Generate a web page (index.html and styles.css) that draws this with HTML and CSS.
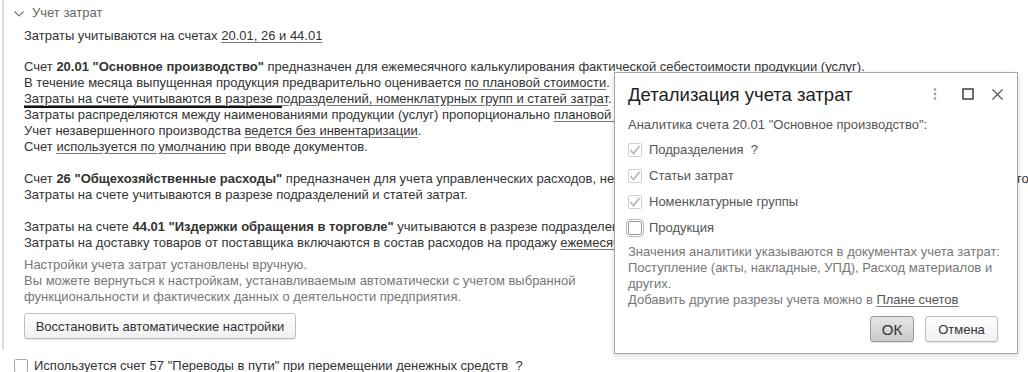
FILE: index.html
```html
<!DOCTYPE html>
<html lang="ru">
<head>
    <meta charset="UTF-8">
    <title>Учет затрат</title>
    <link rel="stylesheet" href="styles.css">
</head>
<body>

    <!-- ГРУППА "УЧЕТ ЗАТРАТ" -->
    <div class="group">
        <div class="group-title">
            <svg class="chevron" width="10" height="6" viewBox="0 0 10 6"><path d="M0.5 0.5 L5 5 L9.5 0.5" fill="none" stroke="#777" stroke-width="1.2"/></svg>
            Учет затрат
        </div>

        <div class="line accounts">Затраты учитываются на счетах <a href="#">20.01, 26 и 44.01</a></div>

        <div class="para">
            <div class="line">Счет <b>20.01 "Основное производство"</b> предназначен для ежемесячного калькулирования фактической себестоимости продукции (услуг).</div>
            <div class="line">В течение месяца выпущенная продукция предварительно оценивается <a href="#">по плановой стоимости</a>.</div>
            <div class="line"><a href="#"><span class="marked">Затраты на счете учитываются в разрезе</span> подразделений, номенклатурных групп и статей затрат</a>.</div>
            <div class="line">Затраты распределяются между наименованиями продукции (услуг) пропорционально <a href="#">плановой себестоимости выпуска</a>.</div>
            <div class="line">Учет незавершенного производства <a href="#">ведется без инвентаризации</a>.</div>
            <div class="line">Счет <a href="#">используется по умолчанию</a> при вводе документов.</div>
        </div>

        <div class="para">
            <div class="line">Счет <b>26 "Общехозяйственные расходы"</b> предназначен для учета управленческих расходов, не связанных с производством, и списывается ежемесячно в состав годовых расходов</div>
            <div class="line">Затраты на счете учитываются в разрезе подразделений и статей затрат.</div>
        </div>

        <div class="para">
            <div class="line">Затраты на счете <b>44.01 "Издержки обращения в торговле"</b> учитываются в разрезе подразделений и статей затрат.</div>
            <div class="line">Затраты на доставку товаров от поставщика включаются в состав расходов на продажу <a href="#">ежемесячно</a>.</div>
        </div>

        <div class="note">
            <div class="line">Настройки учета затрат установлены вручную.</div>
            <div class="line">Вы можете вернуться к настройкам, устанавливаемым автоматически с учетом выбранной</div>
            <div class="line">функциональности и фактических данных о деятельности предприятия.</div>
        </div>

        <button class="btn btn-restore">Восстановить автоматические настройки</button>
    </div>

    <label class="check-row">
        <span class="box"></span>
        Используется счет 57 "Переводы в пути" при перемещении денежных средств &nbsp;?
    </label>

    <!-- ОКНО ДЕТАЛИЗАЦИИ -->
    <div class="dialog">
        <div class="dialog-head">
            <div class="dialog-title">Детализация учета затрат</div>
            <div class="dialog-icons">
                <svg class="ic-more" width="4" height="12" viewBox="0 0 4 12"><circle cx="2" cy="1.5" r="1.3" fill="#999"/><circle cx="2" cy="6" r="1.3" fill="#999"/><circle cx="2" cy="10.5" r="1.3" fill="#999"/></svg>
                <svg class="ic-max" width="12" height="12" viewBox="0 0 12 12"><rect x="1" y="1" width="10" height="10" fill="none" stroke="#333" stroke-width="1.4"/></svg>
                <svg class="ic-close" width="11" height="11" viewBox="0 0 11 11"><path d="M0.5 0.5 L10.5 10.5 M10.5 0.5 L0.5 10.5" stroke="#555" stroke-width="1.2"/></svg>
            </div>
        </div>

        <div class="dialog-caption">Аналитика счета 20.01 "Основное производство":</div>

        <div class="opts">
            <div class="opt"><span class="box checked"><svg width="12" height="10" viewBox="0 0 12 10"><path d="M1.5 5 L4.5 8.5 L10.5 1" fill="none" stroke="#b8b8b8" stroke-width="1.8"/></svg></span>Подразделения &nbsp;?</div>
            <div class="opt"><span class="box checked"><svg width="12" height="10" viewBox="0 0 12 10"><path d="M1.5 5 L4.5 8.5 L10.5 1" fill="none" stroke="#b8b8b8" stroke-width="1.8"/></svg></span>Статьи затрат</div>
            <div class="opt"><span class="box checked"><svg width="12" height="10" viewBox="0 0 12 10"><path d="M1.5 5 L4.5 8.5 L10.5 1" fill="none" stroke="#b8b8b8" stroke-width="1.8"/></svg></span>Номенклатурные группы</div>
            <div class="opt"><span class="box focused"></span>Продукция</div>
        </div>

        <div class="dialog-note">
            <div>Значения аналитики указываются в документах учета затрат:</div>
            <div>Поступление (акты, накладные, УПД), Расход материалов и</div>
            <div>других.</div>
            <div>Добавить другие разрезы учета можно в <a href="#">Плане счетов</a></div>
        </div>

        <div class="dialog-buttons">
            <button class="btn btn-ok">ОК</button>
            <button class="btn btn-cancel">Отмена</button>
        </div>
    </div>

</body>
</html>
```

FILE: styles.css
```css
body {
    margin: 0;
    width: 1028px;
    height: 372px;
    overflow: hidden;
    background: #fff;
    font-family: "Liberation Sans", Arial, sans-serif;
    font-size: 13px;
    line-height: 16px;
    color: #333;
    position: relative;
}

a {
    color: #333;
    text-decoration: underline;
    text-decoration-color: #777;
    text-underline-offset: 2px;
}

b {
    font-weight: bold;
}

/* ГРУППА */
.group {
    margin-left: 2px;
    border-left: 2px solid #ddd;
    padding: 5px 0 0 20px;
    height: 350px;
    box-sizing: border-box;
}

.group-title {
    display: flex;
    align-items: center;
    gap: 8px;
    margin-left: -10px;
    color: #666;
}

.chevron {
    margin-top: 1px;
}

.line {
    white-space: nowrap;
}

.accounts {
    margin-top: 7px;
}

.para {
    margin-top: 15px;
}

.para + .para {
    margin-top: 16px;
}

/* жирная черта под текстом (пометка) */
.marked {
    box-shadow: 0 2px 0 #111;
    padding-right: 9px;
    margin-right: -9px;
    display: inline-block;
    line-height: 14px;
    text-decoration: underline;
    text-decoration-color: #777;
    text-underline-offset: 2px;
}

.note {
    margin-top: 6px;
    color: #777;
}

/* КНОПКИ */
.btn {
    font-family: "Liberation Sans", Arial, sans-serif;
    font-size: 13px;
    color: #333;
    border: 1px solid #bdbdbd;
    border-radius: 3px;
    background: linear-gradient(#fff, #f0f0f0);
    box-shadow: 0 1px 1px rgba(0,0,0,0.12);
    cursor: pointer;
}

.btn-restore {
    margin-top: 8px;
    height: 26px;
    width: 272px;
    padding: 0;
}

/* ФЛАЖОК */
.check-row {
    display: flex;
    align-items: center;
    gap: 6px;
    margin-left: 14px;
    margin-top: 8px;
}

.box {
    width: 12px;
    height: 12px;
    border: 1px solid #aaa;
    border-radius: 2px;
    background: #fff;
    display: inline-flex;
    align-items: center;
    justify-content: center;
    flex: none;
}

/* ОКНО */
.dialog {
    position: absolute;
    left: 614px;
    top: 72px;
    width: 404px;
    height: 282px;
    background: #fff;
    border: 1px solid #a8a8a8;
    box-shadow: 0 2px 6px rgba(0,0,0,0.15);
    padding: 0 0 0 13px;
    box-sizing: border-box;
}

.dialog-head {
    display: flex;
    align-items: center;
    justify-content: space-between;
    height: 42px;
    padding-right: 14px;
}

.dialog-title {
    font-size: 18.5px;
    color: #222;
    padding-top: 2px;
}

.dialog-icons {
    display: flex;
    align-items: center;
}

.ic-max {
    margin-left: 25px;
}

.ic-close {
    margin-left: 18px;
}

.dialog-caption {
    margin-top: 2px;
    color: #555;
}

.opts {
    margin-top: 4px;
}

.opt {
    display: flex;
    align-items: center;
    gap: 7px;
    height: 26px;
    color: #555;
}

.box.checked {
    border-color: #d0d0d0;
}

.box.focused {
    border-color: #999;
    outline: 1px solid #bbb;
    outline-offset: 1px;
}

.dialog-note {
    margin-top: 3px;
    color: #777;
}

.dialog-note a {
    color: #555;
}

.dialog-buttons {
    display: flex;
    justify-content: flex-end;
    gap: 11px;
    margin-top: 8px;
    padding-right: 19px;
}

.btn-ok {
    width: 44px;
    height: 26px;
    font-size: 15px;
    color: #333;
    border-color: #999;
    background: linear-gradient(#e6e6e6, #c9c9c9);
}

.btn-cancel {
    width: 73px;
    height: 26px;
}
```
